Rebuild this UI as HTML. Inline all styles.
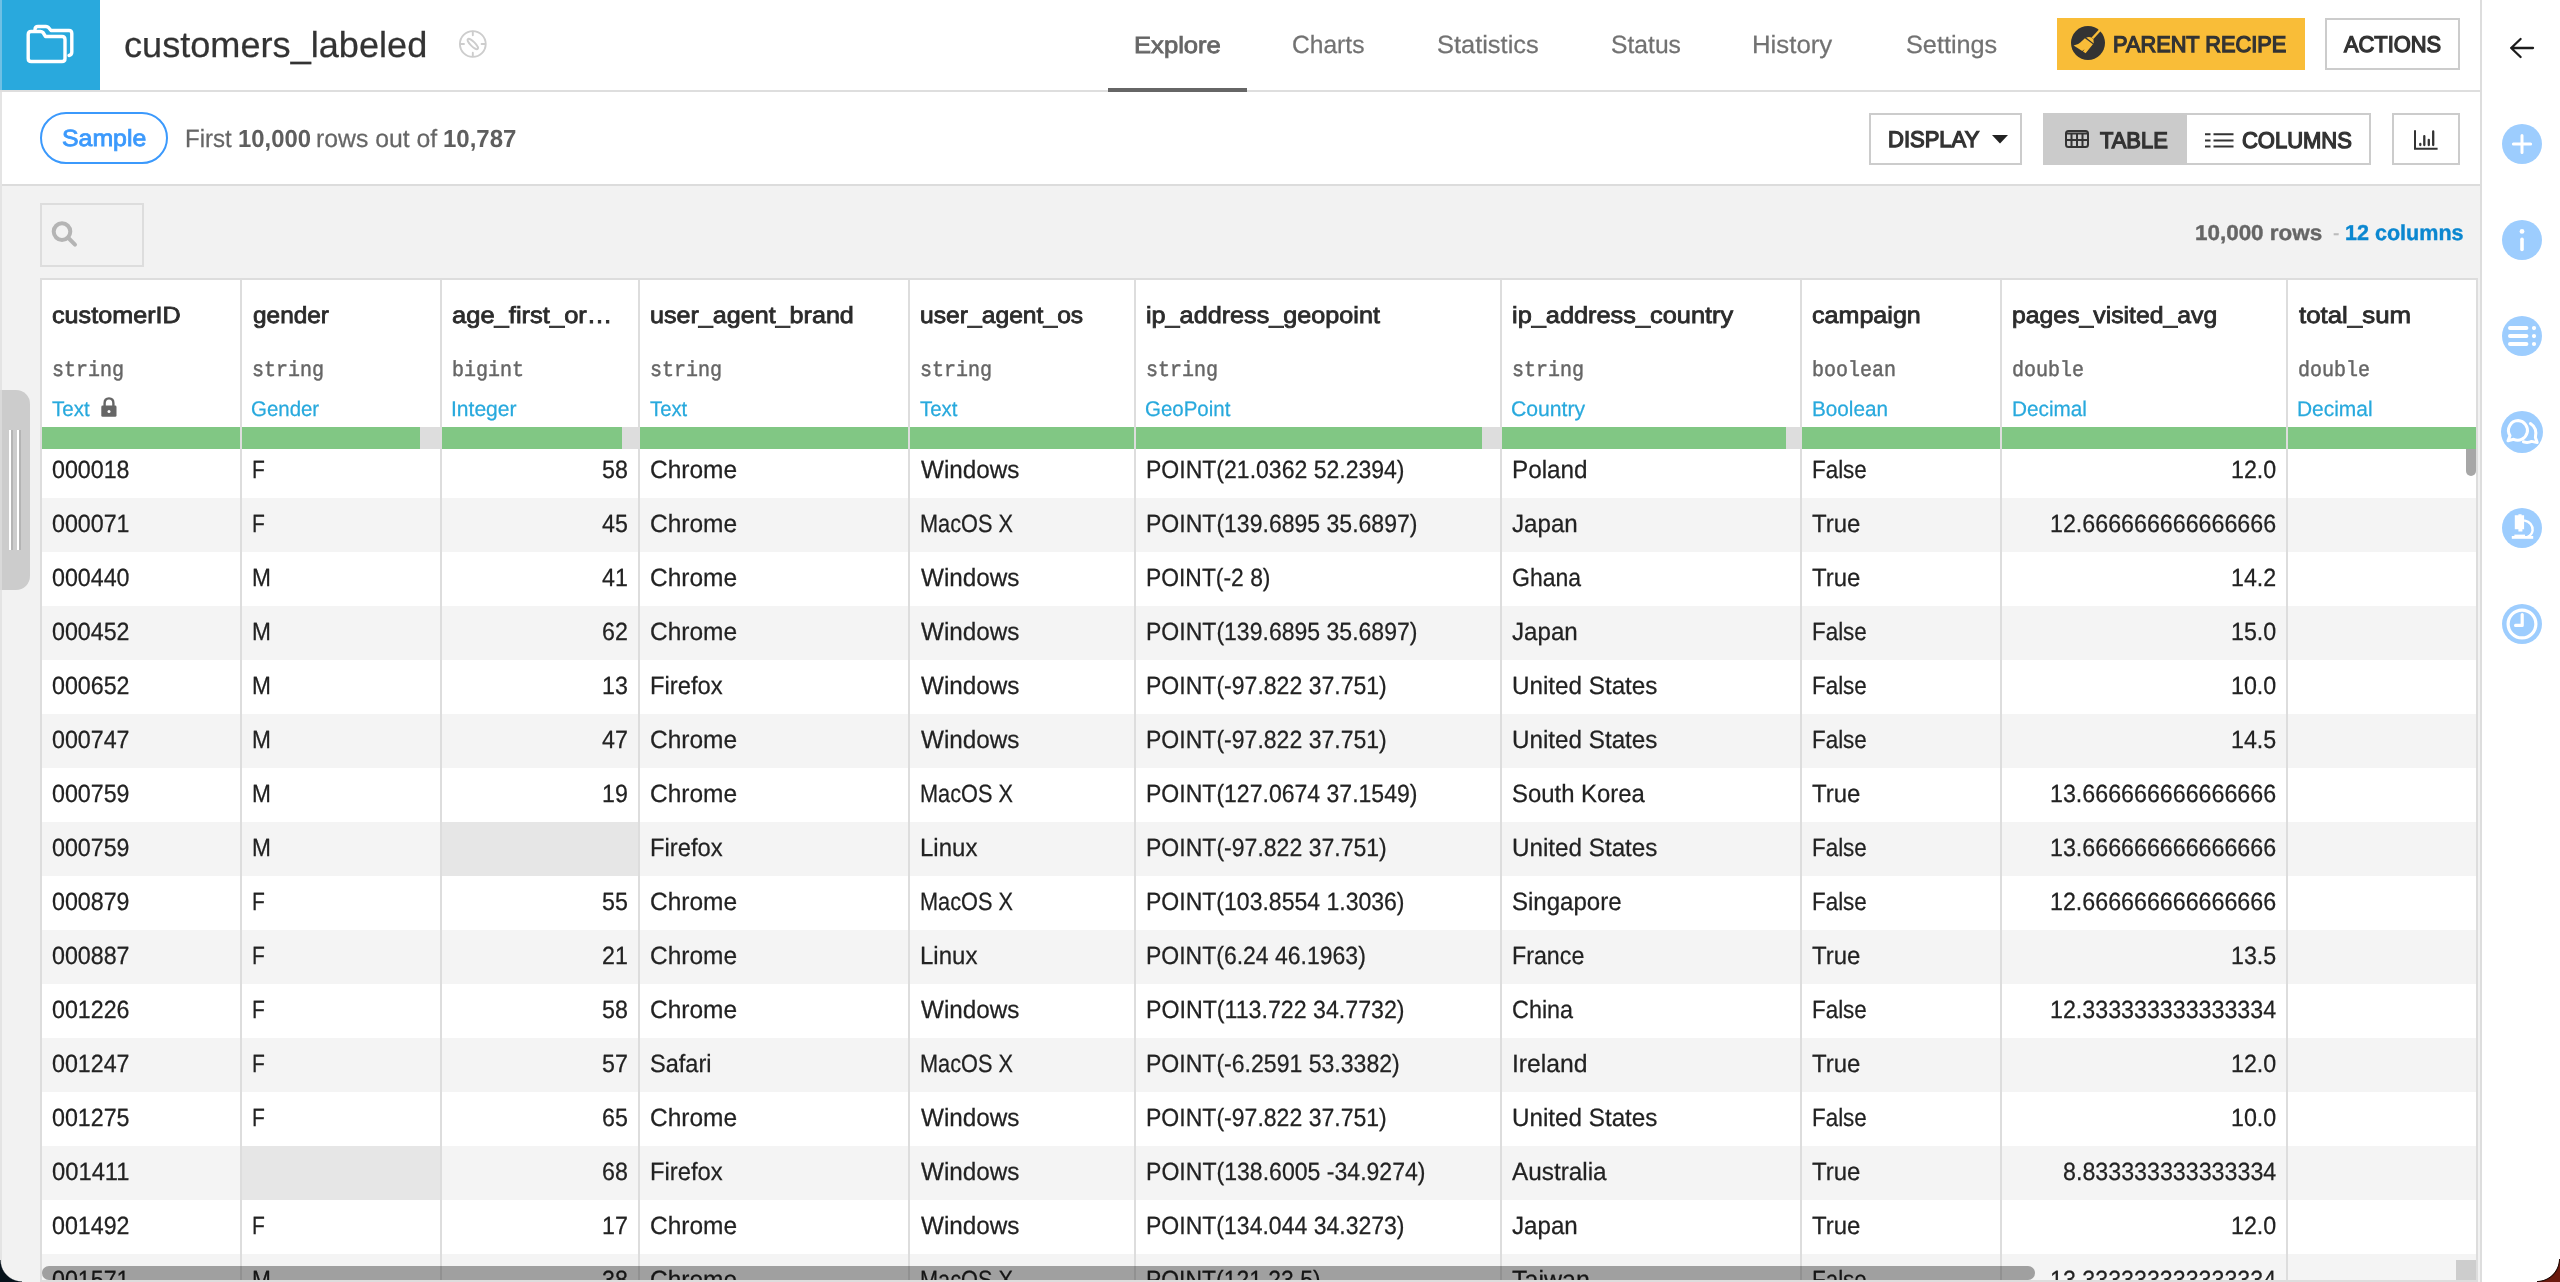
<!DOCTYPE html>
<html><head><meta charset="utf-8"><title>customers_labeled</title>
<style>
html,body{margin:0;padding:0;background:#fff;overflow:hidden;}
html{width:2560px;height:1282px;}
body{width:2560px;height:1282px;position:relative;overflow:hidden;font-family:"Liberation Sans",sans-serif;}
.bx{position:absolute;box-sizing:border-box;}
.t{position:absolute;white-space:pre;line-height:40px;height:40px;transform-origin:0 0;text-rendering:geometricPrecision;font-family:"Liberation Sans",sans-serif;font-weight:400;}
.t.m{font-family:"Liberation Mono",monospace;}
.t.b{font-weight:700;}
svg{position:absolute;overflow:visible;}
.circ{position:absolute;border-radius:50%;background:#9dcdfe;}
#w{position:absolute;left:0;top:0;width:2560px;height:1282px;will-change:transform;overflow:hidden;}
</style></head><body><div id="w">
<!-- left edge strip -->
<div class="bx" style="left:0;top:0;width:2px;height:1282px;background:#e4e4e4"></div>
<!-- header -->
<div class="bx" style="left:2px;top:0;width:98px;height:90px;background:#29a9dd"></div>
<div class="bx" style="left:0;top:0;width:2px;height:90px;background:#6fc0e4"></div>
<div class="bx" style="left:0;top:90px;width:2480px;height:2px;background:#dedede"></div>
<div class="bx" style="left:1108px;top:88px;width:139px;height:4px;background:#666"></div>
<!-- folder icon -->
<svg style="left:26px;top:24px" width="48" height="40" viewBox="0 0 48 40" fill="none" stroke="#fff" stroke-width="3.4" stroke-linejoin="round" stroke-linecap="round">
<path d="M9 7 V5.5 Q9 2.5 12 2.5 H20 Q21.5 2.5 22.5 3.5 L25 6.5 H43 Q45.8 6.5 45.8 9.5 V28 Q45.8 31 43 31.5"/>
<path d="M2.2 10.5 Q2.2 7.5 5.2 7.5 H14.5 Q16 7.5 17 8.5 L19.5 12.5 H36 Q39 12.5 39 15.5 V34.5 Q39 37.5 36 37.5 H5.2 Q2.2 37.5 2.2 34.5 Z"/>
</svg>
<!-- compass icon -->
<svg style="left:458px;top:29px" width="30" height="30" viewBox="0 0 30 30" fill="none" stroke="#cdcdcd" stroke-width="1.9" stroke-linecap="round">
<circle cx="14.8" cy="15" r="12.9"/>
<path d="M14.8 2.8V6.2M14.8 23.8V27.2M2.6 15H6M23.6 15H27"/>
<ellipse cx="14.8" cy="15" rx="7.0" ry="2.2" transform="rotate(45 14.8 15)"/>
</svg>
<!-- parent recipe button -->
<div class="bx" style="left:2057px;top:18px;width:248px;height:52px;background:#f9bd38"></div>
<svg style="left:2071px;top:26px" width="34" height="34" viewBox="0 0 34 34">
<circle cx="17" cy="17" r="17" fill="#333"/>
<path d="M30.2 4.6 L28.4 3.0 L20.6 11.4 L22.4 13.0 Z" fill="#f9bd38"/>
<path d="M15.2 11.4 Q18.5 10.6 20.4 11.6 L22.4 13.2 Q22.6 15.4 22.8 17.4 Z" fill="#f9bd38"/>
<path d="M13.9 12.3 L21.9 18.3 L14.6 27.2 L12.0 25.4 L13.6 23.2 L11.2 25.0 L2.6 19.4 Q7.2 18.9 9.6 16.2 Z" fill="#f9bd38"/>
</svg>
<!-- actions button -->
<div class="bx" style="left:2325px;top:18px;width:135px;height:52px;border:2px solid #ccc;background:#fff"></div>

<!-- second bar -->
<div class="bx" style="left:2px;top:184px;width:2478px;height:2px;background:#dcdcdc"></div>
<div class="bx" style="left:40px;top:112px;width:128px;height:52px;border:2px solid #3b99fc;border-radius:26px"></div>
<div class="bx" style="left:1869px;top:113px;width:153px;height:52px;border:2px solid #ccc;background:#fff"></div>
<svg style="left:1992px;top:135px" width="16" height="9" viewBox="0 0 16 9"><path d="M0 0H16L8 8.6Z" fill="#222"/></svg>
<div class="bx" style="left:2043px;top:113px;width:328px;height:52px;border:2px solid #ccc;background:#fff"></div>
<div class="bx" style="left:2043px;top:113px;width:144px;height:52px;background:#cbcbcb"></div>
<!-- table icon -->
<svg style="left:2065px;top:130px" width="24" height="18" viewBox="0 0 24 18" fill="none" stroke="#333" stroke-width="2">
<rect x="1" y="1" width="22" height="16" rx="2.5"/>
<path d="M1 3.4H23M1 10H23M6.5 3.4V17M12 3.4V17M17.5 3.4V17"/>
</svg>
<!-- columns icon -->
<svg style="left:2205px;top:133px" width="29" height="15" viewBox="0 0 29 15" fill="none" stroke="#333" stroke-width="2">
<path d="M0 1.2H5.5M8.5 1.2H28.5M0 7.5H5.5M8.5 7.5H28.5M0 13.6H5.5M8.5 13.6H28.5"/>
</svg>
<!-- chart button -->
<div class="bx" style="left:2392px;top:113px;width:68px;height:52px;border:2px solid #ccc;background:#fff"></div>
<svg style="left:2414px;top:130px" width="24" height="20" viewBox="0 0 24 20" fill="none" stroke="#333" stroke-width="2">
<path d="M1 0.2V18.7H23.6"/><path d="M6.3 15V14M10.3 15V6.2M14.8 15V9.8M19.2 15V1.4" stroke-width="2.3" stroke-linecap="round"/>
</svg>

<!-- grey area -->
<div class="bx" style="left:2px;top:186px;width:2478px;height:1096px;background:#f2f2f2"></div>
<!-- left handle -->
<div class="bx" style="left:2px;top:390px;width:28px;height:200px;background:#ccc;border-radius:0 14px 14px 0"></div>
<div class="bx" style="left:9px;top:430px;width:2px;height:120px;background:#fff"></div>
<div class="bx" style="left:17px;top:430px;width:2px;height:120px;background:#fff"></div>
<div class="bx" style="left:11px;top:430px;width:2px;height:120px;background:#b4b4b4"></div>
<div class="bx" style="left:19px;top:430px;width:2px;height:120px;background:#b4b4b4"></div>
<div class="bx" style="left:0;top:390px;width:2px;height:200px;background:#d9d9d9"></div>
<!-- search box -->
<div class="bx" style="left:40px;top:203px;width:104px;height:64px;border:2px solid #ddd"></div>
<svg style="left:50px;top:219px" width="30" height="30" viewBox="0 0 30 30" fill="none" stroke="#b4b4b4" stroke-width="4" stroke-linecap="round">
<circle cx="12" cy="12.6" r="8.3"/><path d="M18.4 19L25 25.6"/>
</svg>
<!-- table -->
<div class="bx" style="left:40px;top:278px;width:2438px;height:1006px;border:2px solid #ddd;background:#fff"></div>
<div class="bx" style="left:42px;top:498px;width:2434px;height:54px;background:#f4f4f4"></div>
<div class="bx" style="left:42px;top:606px;width:2434px;height:54px;background:#f4f4f4"></div>
<div class="bx" style="left:42px;top:714px;width:2434px;height:54px;background:#f4f4f4"></div>
<div class="bx" style="left:42px;top:822px;width:2434px;height:54px;background:#f4f4f4"></div>
<div class="bx" style="left:42px;top:930px;width:2434px;height:54px;background:#f4f4f4"></div>
<div class="bx" style="left:42px;top:1038px;width:2434px;height:54px;background:#f4f4f4"></div>
<div class="bx" style="left:42px;top:1146px;width:2434px;height:54px;background:#f4f4f4"></div>
<div class="bx" style="left:42px;top:1254px;width:2434px;height:54px;background:#f4f4f4"></div>
<div class="bx" style="left:442px;top:822px;width:196px;height:54px;background:#e6e6e6"></div>
<div class="bx" style="left:242px;top:1146px;width:198px;height:54px;background:#e6e6e6"></div>
<!-- green bars -->
<div class="bx" style="left:42px;top:427px;width:2434px;height:22px;background:#81c784"></div>
<div class="bx" style="left:420px;top:427px;width:20px;height:22px;background:#ddd"></div>
<div class="bx" style="left:622px;top:427px;width:16px;height:22px;background:#ddd"></div>
<div class="bx" style="left:1482px;top:427px;width:18px;height:22px;background:#ddd"></div>
<div class="bx" style="left:1786px;top:427px;width:14px;height:22px;background:#ddd"></div>
<div class="bx" style="left:240px;top:280px;width:2px;height:1000px;background:#ddd"></div>
<div class="bx" style="left:440px;top:280px;width:2px;height:1000px;background:#ddd"></div>
<div class="bx" style="left:638px;top:280px;width:2px;height:1000px;background:#ddd"></div>
<div class="bx" style="left:908px;top:280px;width:2px;height:1000px;background:#ddd"></div>
<div class="bx" style="left:1134px;top:280px;width:2px;height:1000px;background:#ddd"></div>
<div class="bx" style="left:1500px;top:280px;width:2px;height:1000px;background:#ddd"></div>
<div class="bx" style="left:1800px;top:280px;width:2px;height:1000px;background:#ddd"></div>
<div class="bx" style="left:2000px;top:280px;width:2px;height:1000px;background:#ddd"></div>
<div class="bx" style="left:2286px;top:280px;width:2px;height:1000px;background:#ddd"></div>
<!-- lock -->
<svg style="left:101px;top:397px" width="16" height="20" viewBox="0 0 16 20">
<path d="M3.6 9V6.2Q3.6 1.4 8 1.4Q12.4 1.4 12.4 6.2V9" fill="none" stroke="#666" stroke-width="2.4"/>
<rect x="0.3" y="8.6" width="15.2" height="11.2" rx="1.4" fill="#666"/><circle cx="8" cy="14.6" r="1.5" fill="#fff"/>
</svg>
<span class="t s" style="left:124.12px;top:25px;font-size:35.93px;color:#333;transform:scaleX(1.0057);-webkit-text-stroke:0.25px #333">customers_labeled</span>
<span class="t s" style="left:1134.34px;top:25px;font-size:23.43px;color:#666;transform:scaleX(1.0934);-webkit-text-stroke:0.80px #666">Explore</span>
<span class="t s" style="left:1291.64px;top:25px;font-size:24.91px;color:#727272;transform:scaleX(0.9874);-webkit-text-stroke:0.25px #727272">Charts</span>
<span class="t s" style="left:1436.61px;top:25px;font-size:24.91px;color:#727272;transform:scaleX(1.0208);-webkit-text-stroke:0.25px #727272">Statistics</span>
<span class="t s" style="left:1610.88px;top:25px;font-size:24.91px;color:#727272;transform:scaleX(0.9905);-webkit-text-stroke:0.25px #727272">Status</span>
<span class="t s" style="left:1752.06px;top:25px;font-size:24.91px;color:#727272;transform:scaleX(1.0354);-webkit-text-stroke:0.25px #727272">History</span>
<span class="t s" style="left:1906.11px;top:25px;font-size:24.91px;color:#727272;transform:scaleX(1.0135);-webkit-text-stroke:0.25px #727272">Settings</span>
<span class="t s" style="left:2112.66px;top:24px;font-size:22.71px;color:#333;transform:scaleX(0.9586);-webkit-text-stroke:1.30px #333">PARENT RECIPE</span>
<span class="t s" style="left:2343.63px;top:24px;font-size:22.71px;color:#333;transform:scaleX(0.9630);-webkit-text-stroke:1.30px #333">ACTIONS</span>
<span class="t s" style="left:62.36px;top:118px;font-size:23.43px;color:#3b99fc;transform:scaleX(1.0614);-webkit-text-stroke:0.80px #3b99fc">Sample</span>
<span class="t s" style="left:184.79px;top:119px;font-size:24.91px;color:#666;transform:scaleX(0.9647);-webkit-text-stroke:0.25px #666">First</span>
<span class="t s b" style="left:237.73px;top:120px;font-size:24.70px;color:#5e5e5e;transform:scaleX(0.9663)">10,000</span>
<span class="t s" style="left:316.13px;top:119px;font-size:24.91px;color:#666;transform:scaleX(0.9946);-webkit-text-stroke:0.25px #666">rows out of</span>
<span class="t s b" style="left:442.78px;top:120px;font-size:24.70px;color:#5e5e5e;transform:scaleX(0.9724)">10,787</span>
<span class="t s" style="left:1887.66px;top:119px;font-size:22.71px;color:#333;transform:scaleX(0.9695);-webkit-text-stroke:1.30px #333">DISPLAY</span>
<span class="t s" style="left:2100.23px;top:120px;font-size:22.71px;color:#333;transform:scaleX(0.9649);-webkit-text-stroke:1.30px #333">TABLE</span>
<span class="t s" style="left:2242.06px;top:120px;font-size:22.71px;color:#333;transform:scaleX(0.9676);-webkit-text-stroke:1.30px #333">COLUMNS</span>
<span class="t s b" style="left:2195.17px;top:213px;font-size:21.63px;color:#666;transform:scaleX(1.0369);-webkit-text-stroke:0.40px #666">10,000 rows</span>
<span class="t s" style="left:2332.71px;top:213px;font-size:21.84px;color:#bbb;transform:scaleX(0.8813);-webkit-text-stroke:0.25px #bbb">-</span>
<span class="t s b" style="left:2344.70px;top:213px;font-size:21.63px;color:#0b87d0;transform:scaleX(0.9961);-webkit-text-stroke:0.40px #0b87d0">12 columns</span>
<span class="t s" style="left:51.86px;top:295px;font-size:23.43px;color:#2b2b2b;transform:scaleX(1.0747);-webkit-text-stroke:0.80px #2b2b2b">customerID</span>
<span class="t s" style="left:253.42px;top:295px;font-size:23.43px;color:#2b2b2b;transform:scaleX(1.0414);-webkit-text-stroke:0.80px #2b2b2b">gender</span>
<span class="t s" style="left:451.85px;top:295px;font-size:23.43px;color:#2b2b2b;transform:scaleX(1.0901);-webkit-text-stroke:0.80px #2b2b2b">age_first_or…</span>
<span class="t s" style="left:649.86px;top:295px;font-size:23.43px;color:#2b2b2b;transform:scaleX(1.0719);-webkit-text-stroke:0.80px #2b2b2b">user_agent_brand</span>
<span class="t s" style="left:920.12px;top:295px;font-size:23.43px;color:#2b2b2b;transform:scaleX(1.0532);-webkit-text-stroke:0.80px #2b2b2b">user_agent_os</span>
<span class="t s" style="left:1146.10px;top:295px;font-size:23.43px;color:#2b2b2b;transform:scaleX(1.0756);-webkit-text-stroke:0.80px #2b2b2b">ip_address_geopoint</span>
<span class="t s" style="left:1511.85px;top:295px;font-size:23.43px;color:#2b2b2b;transform:scaleX(1.0818);-webkit-text-stroke:0.80px #2b2b2b">ip_address_country</span>
<span class="t s" style="left:1812.36px;top:295px;font-size:23.43px;color:#2b2b2b;transform:scaleX(1.0714);-webkit-text-stroke:0.80px #2b2b2b">campaign</span>
<span class="t s" style="left:2012.37px;top:295px;font-size:23.43px;color:#2b2b2b;transform:scaleX(1.0581);-webkit-text-stroke:0.80px #2b2b2b">pages_visited_avg</span>
<span class="t s" style="left:2298.84px;top:295px;font-size:23.43px;color:#2b2b2b;transform:scaleX(1.1038);-webkit-text-stroke:0.80px #2b2b2b">total_sum</span>
<span class="t m" style="left:52.00px;top:351px;font-size:21.86px;color:#666;transform:scaleX(0.9146);-webkit-text-stroke:0.45px #666">string</span>
<span class="t m" style="left:252.00px;top:351px;font-size:21.86px;color:#666;transform:scaleX(0.9146);-webkit-text-stroke:0.45px #666">string</span>
<span class="t m" style="left:452.00px;top:351px;font-size:21.86px;color:#666;transform:scaleX(0.9146);-webkit-text-stroke:0.45px #666">bigint</span>
<span class="t m" style="left:650.00px;top:351px;font-size:21.86px;color:#666;transform:scaleX(0.9146);-webkit-text-stroke:0.45px #666">string</span>
<span class="t m" style="left:920.00px;top:351px;font-size:21.86px;color:#666;transform:scaleX(0.9146);-webkit-text-stroke:0.45px #666">string</span>
<span class="t m" style="left:1146.00px;top:351px;font-size:21.86px;color:#666;transform:scaleX(0.9146);-webkit-text-stroke:0.45px #666">string</span>
<span class="t m" style="left:1512.00px;top:351px;font-size:21.86px;color:#666;transform:scaleX(0.9146);-webkit-text-stroke:0.45px #666">string</span>
<span class="t m" style="left:1812.00px;top:351px;font-size:21.86px;color:#666;transform:scaleX(0.9148);-webkit-text-stroke:0.45px #666">boolean</span>
<span class="t m" style="left:2012.00px;top:351px;font-size:21.86px;color:#666;transform:scaleX(0.9146);-webkit-text-stroke:0.45px #666">double</span>
<span class="t m" style="left:2298.00px;top:351px;font-size:21.86px;color:#666;transform:scaleX(0.9146);-webkit-text-stroke:0.45px #666">double</span>
<span class="t s" style="left:52.12px;top:390px;font-size:21.20px;color:#28a9dd;transform:scaleX(0.9688);-webkit-text-stroke:0.25px #28a9dd">Text</span>
<span class="t s" style="left:251.16px;top:390px;font-size:21.20px;color:#28a9dd;transform:scaleX(0.9647);-webkit-text-stroke:0.25px #28a9dd">Gender</span>
<span class="t s" style="left:451.13px;top:390px;font-size:21.20px;color:#28a9dd;transform:scaleX(0.9937);-webkit-text-stroke:0.25px #28a9dd">Integer</span>
<span class="t s" style="left:650.12px;top:390px;font-size:21.20px;color:#28a9dd;transform:scaleX(0.9561);-webkit-text-stroke:0.25px #28a9dd">Text</span>
<span class="t s" style="left:920.37px;top:390px;font-size:21.20px;color:#28a9dd;transform:scaleX(0.9625);-webkit-text-stroke:0.25px #28a9dd">Text</span>
<span class="t s" style="left:1145.40px;top:390px;font-size:21.20px;color:#28a9dd;transform:scaleX(0.9663);-webkit-text-stroke:0.25px #28a9dd">GeoPoint</span>
<span class="t s" style="left:1511.13px;top:390px;font-size:21.20px;color:#28a9dd;transform:scaleX(0.9987);-webkit-text-stroke:0.25px #28a9dd">Country</span>
<span class="t s" style="left:1811.64px;top:390px;font-size:21.20px;color:#28a9dd;transform:scaleX(0.9773);-webkit-text-stroke:0.25px #28a9dd">Boolean</span>
<span class="t s" style="left:2011.64px;top:390px;font-size:21.20px;color:#28a9dd;transform:scaleX(0.9790);-webkit-text-stroke:0.25px #28a9dd">Decimal</span>
<span class="t s" style="left:2297.04px;top:390px;font-size:21.20px;color:#28a9dd;transform:scaleX(0.9870);-webkit-text-stroke:0.25px #28a9dd">Decimal</span>
<span class="t s" style="left:52.00px;top:450px;font-size:24.91px;color:#222;transform:scaleX(0.9327);-webkit-text-stroke:0.25px #222">000018</span>
<span class="t s" style="left:252.00px;top:450px;font-size:24.91px;color:#222;transform:scaleX(0.8440);-webkit-text-stroke:0.25px #222">F</span>
<span class="t s" style="left:602.16px;top:450px;font-size:24.91px;color:#222;transform:scaleX(0.9324);-webkit-text-stroke:0.25px #222">58</span>
<span class="t s" style="left:649.89px;top:450px;font-size:24.91px;color:#222;transform:scaleX(0.9828);-webkit-text-stroke:0.25px #222">Chrome</span>
<span class="t s" style="left:920.62px;top:450px;font-size:24.91px;color:#222;transform:scaleX(0.9743);-webkit-text-stroke:0.25px #222">Windows</span>
<span class="t s" style="left:1146.00px;top:450px;font-size:24.91px;color:#222;transform:scaleX(0.9244);-webkit-text-stroke:0.25px #222">POINT(21.0362 52.2394)</span>
<span class="t s" style="left:1512.00px;top:450px;font-size:24.91px;color:#222;transform:scaleX(0.9746);-webkit-text-stroke:0.25px #222">Poland</span>
<span class="t s" style="left:1812.00px;top:450px;font-size:24.91px;color:#222;transform:scaleX(0.8992);-webkit-text-stroke:0.25px #222">False</span>
<span class="t s" style="left:2230.76px;top:450px;font-size:24.91px;color:#222;transform:scaleX(0.9331);-webkit-text-stroke:0.25px #222">12.0</span>
<span class="t s" style="left:52.00px;top:504px;font-size:24.91px;color:#222;transform:scaleX(0.9327);-webkit-text-stroke:0.25px #222">000071</span>
<span class="t s" style="left:252.00px;top:504px;font-size:24.91px;color:#222;transform:scaleX(0.8440);-webkit-text-stroke:0.25px #222">F</span>
<span class="t s" style="left:602.16px;top:504px;font-size:24.91px;color:#222;transform:scaleX(0.9324);-webkit-text-stroke:0.25px #222">45</span>
<span class="t s" style="left:649.89px;top:504px;font-size:24.91px;color:#222;transform:scaleX(0.9828);-webkit-text-stroke:0.25px #222">Chrome</span>
<span class="t s" style="left:919.61px;top:504px;font-size:24.91px;color:#222;transform:scaleX(0.8720);-webkit-text-stroke:0.25px #222">MacOS X</span>
<span class="t s" style="left:1146.00px;top:504px;font-size:24.91px;color:#222;transform:scaleX(0.9248);-webkit-text-stroke:0.25px #222">POINT(139.6895 35.6897)</span>
<span class="t s" style="left:1512.00px;top:504px;font-size:24.91px;color:#222;transform:scaleX(0.9685);-webkit-text-stroke:0.25px #222">Japan</span>
<span class="t s" style="left:1812.00px;top:504px;font-size:24.91px;color:#222;transform:scaleX(0.9622);-webkit-text-stroke:0.25px #222">True</span>
<span class="t s" style="left:2049.85px;top:504px;font-size:24.91px;color:#222;transform:scaleX(0.9329);-webkit-text-stroke:0.25px #222">12.666666666666666</span>
<span class="t s" style="left:52.00px;top:558px;font-size:24.91px;color:#222;transform:scaleX(0.9327);-webkit-text-stroke:0.25px #222">000440</span>
<span class="t s" style="left:252.00px;top:558px;font-size:24.91px;color:#222;transform:scaleX(0.9109);-webkit-text-stroke:0.25px #222">M</span>
<span class="t s" style="left:602.16px;top:558px;font-size:24.91px;color:#222;transform:scaleX(0.9324);-webkit-text-stroke:0.25px #222">41</span>
<span class="t s" style="left:649.89px;top:558px;font-size:24.91px;color:#222;transform:scaleX(0.9828);-webkit-text-stroke:0.25px #222">Chrome</span>
<span class="t s" style="left:920.62px;top:558px;font-size:24.91px;color:#222;transform:scaleX(0.9743);-webkit-text-stroke:0.25px #222">Windows</span>
<span class="t s" style="left:1146.00px;top:558px;font-size:24.91px;color:#222;transform:scaleX(0.9177);-webkit-text-stroke:0.25px #222">POINT(-2 8)</span>
<span class="t s" style="left:1512.00px;top:558px;font-size:24.91px;color:#222;transform:scaleX(0.9229);-webkit-text-stroke:0.25px #222">Ghana</span>
<span class="t s" style="left:1812.00px;top:558px;font-size:24.91px;color:#222;transform:scaleX(0.9622);-webkit-text-stroke:0.25px #222">True</span>
<span class="t s" style="left:2230.76px;top:558px;font-size:24.91px;color:#222;transform:scaleX(0.9331);-webkit-text-stroke:0.25px #222">14.2</span>
<span class="t s" style="left:52.00px;top:612px;font-size:24.91px;color:#222;transform:scaleX(0.9327);-webkit-text-stroke:0.25px #222">000452</span>
<span class="t s" style="left:252.00px;top:612px;font-size:24.91px;color:#222;transform:scaleX(0.9109);-webkit-text-stroke:0.25px #222">M</span>
<span class="t s" style="left:602.16px;top:612px;font-size:24.91px;color:#222;transform:scaleX(0.9324);-webkit-text-stroke:0.25px #222">62</span>
<span class="t s" style="left:649.89px;top:612px;font-size:24.91px;color:#222;transform:scaleX(0.9828);-webkit-text-stroke:0.25px #222">Chrome</span>
<span class="t s" style="left:920.62px;top:612px;font-size:24.91px;color:#222;transform:scaleX(0.9743);-webkit-text-stroke:0.25px #222">Windows</span>
<span class="t s" style="left:1146.00px;top:612px;font-size:24.91px;color:#222;transform:scaleX(0.9248);-webkit-text-stroke:0.25px #222">POINT(139.6895 35.6897)</span>
<span class="t s" style="left:1512.00px;top:612px;font-size:24.91px;color:#222;transform:scaleX(0.9685);-webkit-text-stroke:0.25px #222">Japan</span>
<span class="t s" style="left:1812.00px;top:612px;font-size:24.91px;color:#222;transform:scaleX(0.8992);-webkit-text-stroke:0.25px #222">False</span>
<span class="t s" style="left:2230.76px;top:612px;font-size:24.91px;color:#222;transform:scaleX(0.9331);-webkit-text-stroke:0.25px #222">15.0</span>
<span class="t s" style="left:52.00px;top:666px;font-size:24.91px;color:#222;transform:scaleX(0.9327);-webkit-text-stroke:0.25px #222">000652</span>
<span class="t s" style="left:252.00px;top:666px;font-size:24.91px;color:#222;transform:scaleX(0.9109);-webkit-text-stroke:0.25px #222">M</span>
<span class="t s" style="left:602.16px;top:666px;font-size:24.91px;color:#222;transform:scaleX(0.9324);-webkit-text-stroke:0.25px #222">13</span>
<span class="t s" style="left:649.96px;top:666px;font-size:24.91px;color:#222;transform:scaleX(0.9543);-webkit-text-stroke:0.25px #222">Firefox</span>
<span class="t s" style="left:920.62px;top:666px;font-size:24.91px;color:#222;transform:scaleX(0.9743);-webkit-text-stroke:0.25px #222">Windows</span>
<span class="t s" style="left:1146.00px;top:666px;font-size:24.91px;color:#222;transform:scaleX(0.9252);-webkit-text-stroke:0.25px #222">POINT(-97.822 37.751)</span>
<span class="t s" style="left:1512.00px;top:666px;font-size:24.91px;color:#222;transform:scaleX(0.9727);-webkit-text-stroke:0.25px #222">United States</span>
<span class="t s" style="left:1812.00px;top:666px;font-size:24.91px;color:#222;transform:scaleX(0.8992);-webkit-text-stroke:0.25px #222">False</span>
<span class="t s" style="left:2230.76px;top:666px;font-size:24.91px;color:#222;transform:scaleX(0.9331);-webkit-text-stroke:0.25px #222">10.0</span>
<span class="t s" style="left:52.00px;top:720px;font-size:24.91px;color:#222;transform:scaleX(0.9327);-webkit-text-stroke:0.25px #222">000747</span>
<span class="t s" style="left:252.00px;top:720px;font-size:24.91px;color:#222;transform:scaleX(0.9109);-webkit-text-stroke:0.25px #222">M</span>
<span class="t s" style="left:602.16px;top:720px;font-size:24.91px;color:#222;transform:scaleX(0.9324);-webkit-text-stroke:0.25px #222">47</span>
<span class="t s" style="left:649.89px;top:720px;font-size:24.91px;color:#222;transform:scaleX(0.9828);-webkit-text-stroke:0.25px #222">Chrome</span>
<span class="t s" style="left:920.62px;top:720px;font-size:24.91px;color:#222;transform:scaleX(0.9743);-webkit-text-stroke:0.25px #222">Windows</span>
<span class="t s" style="left:1146.00px;top:720px;font-size:24.91px;color:#222;transform:scaleX(0.9252);-webkit-text-stroke:0.25px #222">POINT(-97.822 37.751)</span>
<span class="t s" style="left:1512.00px;top:720px;font-size:24.91px;color:#222;transform:scaleX(0.9727);-webkit-text-stroke:0.25px #222">United States</span>
<span class="t s" style="left:1812.00px;top:720px;font-size:24.91px;color:#222;transform:scaleX(0.8992);-webkit-text-stroke:0.25px #222">False</span>
<span class="t s" style="left:2230.76px;top:720px;font-size:24.91px;color:#222;transform:scaleX(0.9331);-webkit-text-stroke:0.25px #222">14.5</span>
<span class="t s" style="left:52.00px;top:774px;font-size:24.91px;color:#222;transform:scaleX(0.9327);-webkit-text-stroke:0.25px #222">000759</span>
<span class="t s" style="left:252.00px;top:774px;font-size:24.91px;color:#222;transform:scaleX(0.9109);-webkit-text-stroke:0.25px #222">M</span>
<span class="t s" style="left:602.16px;top:774px;font-size:24.91px;color:#222;transform:scaleX(0.9324);-webkit-text-stroke:0.25px #222">19</span>
<span class="t s" style="left:649.89px;top:774px;font-size:24.91px;color:#222;transform:scaleX(0.9828);-webkit-text-stroke:0.25px #222">Chrome</span>
<span class="t s" style="left:919.61px;top:774px;font-size:24.91px;color:#222;transform:scaleX(0.8720);-webkit-text-stroke:0.25px #222">MacOS X</span>
<span class="t s" style="left:1146.00px;top:774px;font-size:24.91px;color:#222;transform:scaleX(0.9248);-webkit-text-stroke:0.25px #222">POINT(127.0674 37.1549)</span>
<span class="t s" style="left:1512.00px;top:774px;font-size:24.91px;color:#222;transform:scaleX(0.9592);-webkit-text-stroke:0.25px #222">South Korea</span>
<span class="t s" style="left:1812.00px;top:774px;font-size:24.91px;color:#222;transform:scaleX(0.9622);-webkit-text-stroke:0.25px #222">True</span>
<span class="t s" style="left:2049.85px;top:774px;font-size:24.91px;color:#222;transform:scaleX(0.9329);-webkit-text-stroke:0.25px #222">13.666666666666666</span>
<span class="t s" style="left:52.00px;top:828px;font-size:24.91px;color:#222;transform:scaleX(0.9327);-webkit-text-stroke:0.25px #222">000759</span>
<span class="t s" style="left:252.00px;top:828px;font-size:24.91px;color:#222;transform:scaleX(0.9109);-webkit-text-stroke:0.25px #222">M</span>
<span class="t s" style="left:649.96px;top:828px;font-size:24.91px;color:#222;transform:scaleX(0.9543);-webkit-text-stroke:0.25px #222">Firefox</span>
<span class="t s" style="left:920.00px;top:828px;font-size:24.91px;color:#222;transform:scaleX(0.9638);-webkit-text-stroke:0.25px #222">Linux</span>
<span class="t s" style="left:1146.00px;top:828px;font-size:24.91px;color:#222;transform:scaleX(0.9252);-webkit-text-stroke:0.25px #222">POINT(-97.822 37.751)</span>
<span class="t s" style="left:1512.00px;top:828px;font-size:24.91px;color:#222;transform:scaleX(0.9727);-webkit-text-stroke:0.25px #222">United States</span>
<span class="t s" style="left:1812.00px;top:828px;font-size:24.91px;color:#222;transform:scaleX(0.8992);-webkit-text-stroke:0.25px #222">False</span>
<span class="t s" style="left:2049.85px;top:828px;font-size:24.91px;color:#222;transform:scaleX(0.9329);-webkit-text-stroke:0.25px #222">13.666666666666666</span>
<span class="t s" style="left:52.00px;top:882px;font-size:24.91px;color:#222;transform:scaleX(0.9327);-webkit-text-stroke:0.25px #222">000879</span>
<span class="t s" style="left:252.00px;top:882px;font-size:24.91px;color:#222;transform:scaleX(0.8440);-webkit-text-stroke:0.25px #222">F</span>
<span class="t s" style="left:602.16px;top:882px;font-size:24.91px;color:#222;transform:scaleX(0.9324);-webkit-text-stroke:0.25px #222">55</span>
<span class="t s" style="left:649.89px;top:882px;font-size:24.91px;color:#222;transform:scaleX(0.9828);-webkit-text-stroke:0.25px #222">Chrome</span>
<span class="t s" style="left:919.61px;top:882px;font-size:24.91px;color:#222;transform:scaleX(0.8720);-webkit-text-stroke:0.25px #222">MacOS X</span>
<span class="t s" style="left:1146.00px;top:882px;font-size:24.91px;color:#222;transform:scaleX(0.9244);-webkit-text-stroke:0.25px #222">POINT(103.8554 1.3036)</span>
<span class="t s" style="left:1512.00px;top:882px;font-size:24.91px;color:#222;transform:scaleX(0.9647);-webkit-text-stroke:0.25px #222">Singapore</span>
<span class="t s" style="left:1812.00px;top:882px;font-size:24.91px;color:#222;transform:scaleX(0.8992);-webkit-text-stroke:0.25px #222">False</span>
<span class="t s" style="left:2049.85px;top:882px;font-size:24.91px;color:#222;transform:scaleX(0.9329);-webkit-text-stroke:0.25px #222">12.666666666666666</span>
<span class="t s" style="left:52.00px;top:936px;font-size:24.91px;color:#222;transform:scaleX(0.9327);-webkit-text-stroke:0.25px #222">000887</span>
<span class="t s" style="left:252.00px;top:936px;font-size:24.91px;color:#222;transform:scaleX(0.8440);-webkit-text-stroke:0.25px #222">F</span>
<span class="t s" style="left:602.16px;top:936px;font-size:24.91px;color:#222;transform:scaleX(0.9324);-webkit-text-stroke:0.25px #222">21</span>
<span class="t s" style="left:649.89px;top:936px;font-size:24.91px;color:#222;transform:scaleX(0.9828);-webkit-text-stroke:0.25px #222">Chrome</span>
<span class="t s" style="left:920.00px;top:936px;font-size:24.91px;color:#222;transform:scaleX(0.9638);-webkit-text-stroke:0.25px #222">Linux</span>
<span class="t s" style="left:1146.00px;top:936px;font-size:24.91px;color:#222;transform:scaleX(0.9230);-webkit-text-stroke:0.25px #222">POINT(6.24 46.1963)</span>
<span class="t s" style="left:1512.00px;top:936px;font-size:24.91px;color:#222;transform:scaleX(0.9331);-webkit-text-stroke:0.25px #222">France</span>
<span class="t s" style="left:1812.00px;top:936px;font-size:24.91px;color:#222;transform:scaleX(0.9622);-webkit-text-stroke:0.25px #222">True</span>
<span class="t s" style="left:2230.76px;top:936px;font-size:24.91px;color:#222;transform:scaleX(0.9331);-webkit-text-stroke:0.25px #222">13.5</span>
<span class="t s" style="left:52.00px;top:990px;font-size:24.91px;color:#222;transform:scaleX(0.9327);-webkit-text-stroke:0.25px #222">001226</span>
<span class="t s" style="left:252.00px;top:990px;font-size:24.91px;color:#222;transform:scaleX(0.8440);-webkit-text-stroke:0.25px #222">F</span>
<span class="t s" style="left:602.16px;top:990px;font-size:24.91px;color:#222;transform:scaleX(0.9324);-webkit-text-stroke:0.25px #222">58</span>
<span class="t s" style="left:649.89px;top:990px;font-size:24.91px;color:#222;transform:scaleX(0.9828);-webkit-text-stroke:0.25px #222">Chrome</span>
<span class="t s" style="left:920.62px;top:990px;font-size:24.91px;color:#222;transform:scaleX(0.9743);-webkit-text-stroke:0.25px #222">Windows</span>
<span class="t s" style="left:1146.00px;top:990px;font-size:24.91px;color:#222;transform:scaleX(0.9306);-webkit-text-stroke:0.25px #222">POINT(113.722 34.7732)</span>
<span class="t s" style="left:1512.00px;top:990px;font-size:24.91px;color:#222;transform:scaleX(0.9391);-webkit-text-stroke:0.25px #222">China</span>
<span class="t s" style="left:1812.00px;top:990px;font-size:24.91px;color:#222;transform:scaleX(0.8992);-webkit-text-stroke:0.25px #222">False</span>
<span class="t s" style="left:2049.85px;top:990px;font-size:24.91px;color:#222;transform:scaleX(0.9329);-webkit-text-stroke:0.25px #222">12.333333333333334</span>
<span class="t s" style="left:52.00px;top:1044px;font-size:24.91px;color:#222;transform:scaleX(0.9327);-webkit-text-stroke:0.25px #222">001247</span>
<span class="t s" style="left:252.00px;top:1044px;font-size:24.91px;color:#222;transform:scaleX(0.8440);-webkit-text-stroke:0.25px #222">F</span>
<span class="t s" style="left:602.16px;top:1044px;font-size:24.91px;color:#222;transform:scaleX(0.9324);-webkit-text-stroke:0.25px #222">57</span>
<span class="t s" style="left:650.00px;top:1044px;font-size:24.91px;color:#222;transform:scaleX(0.9450);-webkit-text-stroke:0.25px #222">Safari</span>
<span class="t s" style="left:919.61px;top:1044px;font-size:24.91px;color:#222;transform:scaleX(0.8720);-webkit-text-stroke:0.25px #222">MacOS X</span>
<span class="t s" style="left:1146.00px;top:1044px;font-size:24.91px;color:#222;transform:scaleX(0.9255);-webkit-text-stroke:0.25px #222">POINT(-6.2591 53.3382)</span>
<span class="t s" style="left:1512.00px;top:1044px;font-size:24.91px;color:#222;transform:scaleX(0.9919);-webkit-text-stroke:0.25px #222">Ireland</span>
<span class="t s" style="left:1812.00px;top:1044px;font-size:24.91px;color:#222;transform:scaleX(0.9622);-webkit-text-stroke:0.25px #222">True</span>
<span class="t s" style="left:2230.76px;top:1044px;font-size:24.91px;color:#222;transform:scaleX(0.9331);-webkit-text-stroke:0.25px #222">12.0</span>
<span class="t s" style="left:52.00px;top:1098px;font-size:24.91px;color:#222;transform:scaleX(0.9327);-webkit-text-stroke:0.25px #222">001275</span>
<span class="t s" style="left:252.00px;top:1098px;font-size:24.91px;color:#222;transform:scaleX(0.8440);-webkit-text-stroke:0.25px #222">F</span>
<span class="t s" style="left:602.16px;top:1098px;font-size:24.91px;color:#222;transform:scaleX(0.9324);-webkit-text-stroke:0.25px #222">65</span>
<span class="t s" style="left:649.89px;top:1098px;font-size:24.91px;color:#222;transform:scaleX(0.9828);-webkit-text-stroke:0.25px #222">Chrome</span>
<span class="t s" style="left:920.62px;top:1098px;font-size:24.91px;color:#222;transform:scaleX(0.9743);-webkit-text-stroke:0.25px #222">Windows</span>
<span class="t s" style="left:1146.00px;top:1098px;font-size:24.91px;color:#222;transform:scaleX(0.9252);-webkit-text-stroke:0.25px #222">POINT(-97.822 37.751)</span>
<span class="t s" style="left:1512.00px;top:1098px;font-size:24.91px;color:#222;transform:scaleX(0.9727);-webkit-text-stroke:0.25px #222">United States</span>
<span class="t s" style="left:1812.00px;top:1098px;font-size:24.91px;color:#222;transform:scaleX(0.8992);-webkit-text-stroke:0.25px #222">False</span>
<span class="t s" style="left:2230.76px;top:1098px;font-size:24.91px;color:#222;transform:scaleX(0.9331);-webkit-text-stroke:0.25px #222">10.0</span>
<span class="t s" style="left:52.00px;top:1152px;font-size:24.91px;color:#222;transform:scaleX(0.9541);-webkit-text-stroke:0.25px #222">001411</span>
<span class="t s" style="left:602.16px;top:1152px;font-size:24.91px;color:#222;transform:scaleX(0.9324);-webkit-text-stroke:0.25px #222">68</span>
<span class="t s" style="left:649.96px;top:1152px;font-size:24.91px;color:#222;transform:scaleX(0.9543);-webkit-text-stroke:0.25px #222">Firefox</span>
<span class="t s" style="left:920.62px;top:1152px;font-size:24.91px;color:#222;transform:scaleX(0.9743);-webkit-text-stroke:0.25px #222">Windows</span>
<span class="t s" style="left:1146.00px;top:1152px;font-size:24.91px;color:#222;transform:scaleX(0.9262);-webkit-text-stroke:0.25px #222">POINT(138.6005 -34.9274)</span>
<span class="t s" style="left:1512.00px;top:1152px;font-size:24.91px;color:#222;transform:scaleX(0.9765);-webkit-text-stroke:0.25px #222">Australia</span>
<span class="t s" style="left:1812.00px;top:1152px;font-size:24.91px;color:#222;transform:scaleX(0.9622);-webkit-text-stroke:0.25px #222">True</span>
<span class="t s" style="left:2062.77px;top:1152px;font-size:24.91px;color:#222;transform:scaleX(0.9330);-webkit-text-stroke:0.25px #222">8.833333333333334</span>
<span class="t s" style="left:52.00px;top:1206px;font-size:24.91px;color:#222;transform:scaleX(0.9327);-webkit-text-stroke:0.25px #222">001492</span>
<span class="t s" style="left:252.00px;top:1206px;font-size:24.91px;color:#222;transform:scaleX(0.8440);-webkit-text-stroke:0.25px #222">F</span>
<span class="t s" style="left:602.16px;top:1206px;font-size:24.91px;color:#222;transform:scaleX(0.9324);-webkit-text-stroke:0.25px #222">17</span>
<span class="t s" style="left:649.89px;top:1206px;font-size:24.91px;color:#222;transform:scaleX(0.9828);-webkit-text-stroke:0.25px #222">Chrome</span>
<span class="t s" style="left:920.62px;top:1206px;font-size:24.91px;color:#222;transform:scaleX(0.9743);-webkit-text-stroke:0.25px #222">Windows</span>
<span class="t s" style="left:1146.00px;top:1206px;font-size:24.91px;color:#222;transform:scaleX(0.9244);-webkit-text-stroke:0.25px #222">POINT(134.044 34.3273)</span>
<span class="t s" style="left:1512.00px;top:1206px;font-size:24.91px;color:#222;transform:scaleX(0.9685);-webkit-text-stroke:0.25px #222">Japan</span>
<span class="t s" style="left:1812.00px;top:1206px;font-size:24.91px;color:#222;transform:scaleX(0.9622);-webkit-text-stroke:0.25px #222">True</span>
<span class="t s" style="left:2230.76px;top:1206px;font-size:24.91px;color:#222;transform:scaleX(0.9331);-webkit-text-stroke:0.25px #222">12.0</span>
<span class="t s" style="left:52.00px;top:1260px;font-size:24.91px;color:#222;transform:scaleX(0.9327);-webkit-text-stroke:0.25px #222">001571</span>
<span class="t s" style="left:252.00px;top:1260px;font-size:24.91px;color:#222;transform:scaleX(0.9109);-webkit-text-stroke:0.25px #222">M</span>
<span class="t s" style="left:602.16px;top:1260px;font-size:24.91px;color:#222;transform:scaleX(0.9324);-webkit-text-stroke:0.25px #222">38</span>
<span class="t s" style="left:649.89px;top:1260px;font-size:24.91px;color:#222;transform:scaleX(0.9828);-webkit-text-stroke:0.25px #222">Chrome</span>
<span class="t s" style="left:919.61px;top:1260px;font-size:24.91px;color:#222;transform:scaleX(0.8720);-webkit-text-stroke:0.25px #222">MacOS X</span>
<span class="t s" style="left:1146.00px;top:1260px;font-size:24.91px;color:#222;transform:scaleX(0.9203);-webkit-text-stroke:0.25px #222">POINT(121.23 5)</span>
<span class="t s" style="left:1512.00px;top:1260px;font-size:24.91px;color:#222;transform:scaleX(1.0042);-webkit-text-stroke:0.25px #222">Taiwan</span>
<span class="t s" style="left:1812.00px;top:1260px;font-size:24.91px;color:#222;transform:scaleX(0.8992);-webkit-text-stroke:0.25px #222">False</span>
<span class="t s" style="left:2049.85px;top:1260px;font-size:24.91px;color:#222;transform:scaleX(0.9329);-webkit-text-stroke:0.25px #222">13.333333333333334</span>
<!-- separators drawn in ROWS; scrollbars -->
<div class="bx" style="left:2466px;top:449px;width:10px;height:27px;background:#a7a7a7;border-radius:0 0 5px 5px"></div>
<div class="bx" style="left:2456px;top:1260px;width:20px;height:20px;background:#cdcdcd"></div>
<div class="bx" style="left:42px;top:1266px;width:1993px;height:14px;background:rgba(0,0,0,0.345);border-radius:7px"></div>
<div class="bx" style="left:40px;top:1280px;width:2438px;height:2px;background:#ddd"></div>

<!-- right panel -->
<div class="bx" style="left:2480px;top:0;width:80px;height:1282px;background:#fff"></div>
<div class="bx" style="left:2480px;top:0;width:2px;height:1282px;background:#ddd"></div>
<svg style="left:2509px;top:37px" width="26" height="22" viewBox="0 0 26 22" fill="none" stroke="#1c1c1c" stroke-width="2.3" stroke-linecap="round" stroke-linejoin="round">
<path d="M2.2 11H24M11.6 2L2.2 11L11.6 20"/>
</svg>
<!-- plus -->
<div class="circ" style="left:2502px;top:124px;width:40px;height:40px"></div>
<svg style="left:2502px;top:124px" width="40" height="40" viewBox="0 0 40 40" fill="none" stroke="#fff" stroke-width="3" stroke-linecap="round"><path d="M11.4 20H28.6M20 11.4V28.6"/></svg>
<!-- info -->
<div class="circ" style="left:2502px;top:220px;width:40px;height:40px"></div>
<svg style="left:2502px;top:220px" width="40" height="40" viewBox="0 0 40 40" fill="none" stroke="#fff" stroke-width="3.6" stroke-linecap="round"><path d="M20 19.2V29.4"/><circle cx="20" cy="11.4" r="2.4" fill="#fff" stroke="none"/></svg>
<!-- list -->
<div class="circ" style="left:2502px;top:316px;width:40px;height:40px"></div>
<svg style="left:2502px;top:316px" width="40" height="40" viewBox="0 0 40 40" fill="none" stroke="#fff" stroke-width="4" stroke-linecap="round"><path d="M8 12.1H24.4M8 20.1H24.4M8 28H24.4"/><g fill="#fff" stroke="none"><circle cx="32" cy="12.1" r="2.1"/><circle cx="32" cy="20.1" r="2.1"/><circle cx="32" cy="28" r="2.1"/></g></svg>
<!-- chat -->
<div class="circ" style="left:2501px;top:411px;width:42px;height:42px"></div>
<svg style="left:2501px;top:411.7px" width="42" height="42" viewBox="0 0 42 42" fill="none" stroke="#fff" stroke-width="3" stroke-linecap="round" stroke-linejoin="round">
<path d="M17.2 8.6A9.8 9.8 0 1 1 12.6 27.3L7 28.8L9 23.6A9.8 9.8 0 0 1 17.2 8.6Z"/>
<path d="M29.4 11.6Q36.4 16 34.4 25.4L36.2 30.6L30.6 29.4Q26.8 31.2 22.4 29.8"/>
</svg>
<!-- microscope -->
<div class="circ" style="left:2502px;top:508px;width:40px;height:40px"></div>
<svg style="left:2502px;top:508px" width="40" height="40" viewBox="0 0 40 40" fill="#fff" stroke="none">
<path d="M14.8 7.2H16.4V6.2H19.6V7.2H22.1V21.2H20.4V23.4H16.4V21.2H12.8V7.2Z"/>
<path d="M22.1 12.4Q31 14.4 30.6 22.6Q30 27 25.2 29" fill="none" stroke="#fff" stroke-width="2.4"/>
<rect x="9.8" y="28" width="21.4" height="2.8"/><rect x="12.4" y="26.6" width="10.6" height="1.8"/>
</svg>
<!-- clock -->
<div class="circ" style="left:2502px;top:604px;width:40px;height:40px"></div>
<svg style="left:2502px;top:604px" width="40" height="40" viewBox="0 0 40 40" fill="none" stroke="#fff" stroke-width="3.2" stroke-linecap="round" stroke-linejoin="round"><circle cx="20" cy="20" r="13.9"/><path d="M20.2 10.6V21.4H13.6"/></svg>

<!-- window corners -->
<div class="bx" style="left:0;top:1260px;width:22px;height:22px;background:radial-gradient(circle at 100% 0,rgba(6,18,27,0) 20.8px,#06121b 22px)"></div>
<div class="bx" style="left:2537px;top:1259px;width:23px;height:23px;background:radial-gradient(circle at 0 0,rgba(0,0,0,0) 21.5px,#1a0805 22.3px,#6a1a0e 23.6px)"></div>
</div></body></html>
